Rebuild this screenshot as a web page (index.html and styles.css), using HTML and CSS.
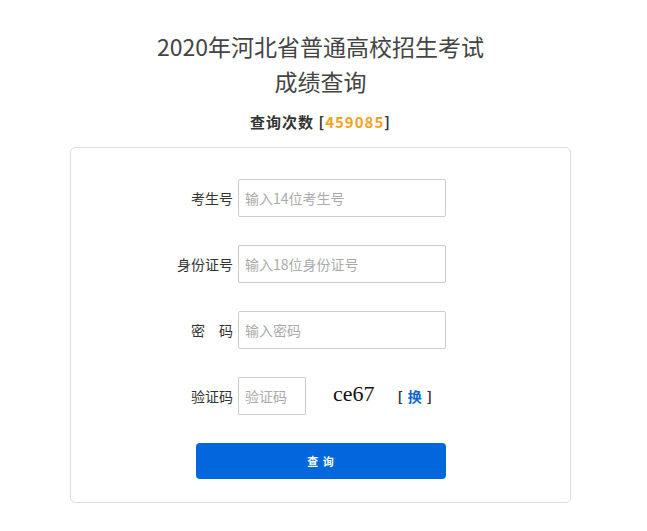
FILE: index.html
```html
<!DOCTYPE html>
<html lang="zh-CN">
<head>
    <meta charset="UTF-8">
    <meta name="viewport" content="width=device-width, initial-scale=1.0">
    <title>成绩查询</title>
    <link rel="stylesheet" href="styles.css">
</head>
<body>
    <div class="page">
        <h1 class="title">2020年河北省普通高校招生考试<br>成绩查询</h1>
        <p class="count">查询次数 [<span class="num">459085</span>]</p>

        <div class="panel">
            <div class="row">
                <label class="label">考生号</label>
                <input class="field" type="text" placeholder="输入14位考生号">
            </div>
            <div class="row">
                <label class="label">身份证号</label>
                <input class="field" type="text" placeholder="输入18位身份证号">
            </div>
            <div class="row">
                <label class="label">密　码</label>
                <input class="field" type="password" placeholder="输入密码">
            </div>
            <div class="row">
                <label class="label">验证码</label>
                <input class="field field-code" type="text" placeholder="验证码">
                <span class="captcha">ce67</span>
                <span class="refresh">[<a class="swap">换</a>]</span>
            </div>
            <button class="submit" type="button">查 询</button>
        </div>
    </div>
</body>
</html>
```

FILE: styles.css
```css
body {
    margin: 0;
    padding: 0 6px 0 0;
    background: #ffffff;
    color: #333333;
    font-family: "Noto Sans CJK SC", "Noto Sans", sans-serif;
}

.page {
    width: 501px;
    margin: 0 auto;
    padding-top: 29px;
}

.title {
    margin: 0;
    font-size: 23px;
    font-weight: 400;
    line-height: 35px;
    color: #444444;
    text-align: center;
}

.count {
    margin: 13px 0 0;
    font-size: 15px;
    font-weight: 700;
    line-height: 20px;
    color: #333333;
    text-align: center;
    letter-spacing: 1px;
}

.count .num {
    color: #f7a21b;
}

.panel {
    margin-top: 15px;
    border: 1px solid #dddddd;
    border-radius: 5px;
    padding: 31px 0 23px;
}

.row {
    display: flex;
    align-items: center;
    height: 38px;
    margin-bottom: 28px;
    padding-left: 62px;
}

.label {
    width: 100px;
    margin-right: 5px;
    font-size: 14px;
    color: #333333;
    text-align: right;
}

.field {
    box-sizing: border-box;
    width: 208px;
    height: 38px;
    padding: 0 6px;
    border: 1px solid #cccccc;
    border-radius: 2px;
    font-family: inherit;
    font-size: 14px;
    color: #333333;
    outline: none;
}

.field::placeholder {
    color: #aaaaaa;
}

.field-code {
    width: 68px;
}

.captcha {
    margin-left: 27px;
    font-family: "Liberation Serif", serif;
    font-size: 22px;
    color: #111111;
    position: relative;
    top: -2px;
}

.refresh {
    margin-left: 23px;
    font-size: 14px;
    font-weight: 700;
    color: #333333;
}

.swap {
    margin: 0 5px;
    color: #0a66cc;
    cursor: pointer;
}

.submit {
    display: block;
    width: 250px;
    height: 36px;
    margin-left: 125px;
    border: none;
    border-radius: 4px;
    background: #0266dc;
    color: #ffffff;
    font-family: inherit;
    font-size: 11px;
    font-weight: 700;
    letter-spacing: 1px;
    cursor: pointer;
}
```
